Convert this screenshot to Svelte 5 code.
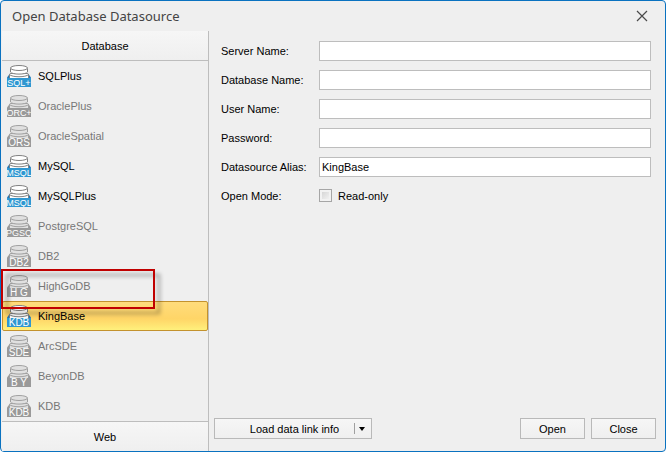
<script>
  const sources = [
    { name: 'SQLPlus', tag: 'SQL+', on: true },
    { name: 'OraclePlus', tag: 'ORC+' },
    { name: 'OracleSpatial', tag: 'ORS' },
    { name: 'MySQL', tag: 'MSQL', on: true },
    { name: 'MySQLPlus', tag: 'MSQL', on: true },
    { name: 'PostgreSQL', tag: 'PGSQ' },
    { name: 'DB2', tag: 'DB2' },
    { name: 'HighGoDB', tag: 'H G', marked: true },
    { name: 'KingBase', tag: 'KDB', on: true },
    { name: 'ArcSDE', tag: 'SDE' },
    { name: 'BeyonDB', tag: 'B Y' },
    { name: 'KDB', tag: 'KDB' }
  ];
  let selected = $state('KingBase');
  let alias = $state('KingBase');
  let readOnly = $state(false);
  const fields = [
    { id: 'server', label: 'Server Name:' },
    { id: 'database', label: 'Database Name:' },
    { id: 'user', label: 'User Name:' },
    { id: 'password', label: 'Password:', type: 'password' }
  ];
</script>

<div class="window">
  <header>
    <h1>Open Database Datasource</h1>
    <button class="x" aria-label="Close window">
      <svg width="12" height="12" viewBox="0 0 12 12"><path d="M1 1L11 11M11 1L1 11" stroke="#4a4a4a" stroke-width="1.2" /></svg>
    </button>
  </header>
  <div class="main">
    <nav>
      <button class="group top">Database</button>
      <ul>
        {#each sources as s}
          <li class:marked={s.marked}>
            <button
              class="item"
              class:selected={selected === s.name}
              disabled={!s.on}
              onclick={() => (selected = s.name)}
            >
              <svg class="icon" class:off={!s.on} width="24" height="22" viewBox="0 0 24 22" aria-hidden="true">
                <path class="tray" d="M3 8.500L0 12.500V14H24V12.500L21 8.500Z" />
                <path class="disk" d="M3.500 8.500C2.500 9 2.500 9.500 2.500 10V13.500H21.500V10C21.500 9.500 21.500 9 20.500 8.500Z" />
                <path class="line" d="M2.500 9.500C5 12.500 19 12.500 21.500 9.500" />
                <path class="disk" d="M3.500 3.500V7C4.500 9.800 19.500 9.800 20.500 7V3.500" />
                <ellipse class="disk" cx="12" cy="3" rx="8.500" ry="2.500" />
                <rect class="band" y="13" width="24" height="9" />
                <text x="12" y="21" text-anchor="middle" class="tag" class:tight={s.tag.length > 3}>{s.tag}</text>
              </svg>
              <span>{s.name}</span>
            </button>
          </li>
        {/each}
      </ul>
      <button class="group bottom">Web</button>
    </nav>
    <section>
      <form>
        {#each fields as f}
          <div class="row">
            <label for={f.id}>{f.label}</label>
            <input id={f.id} type={f.type ?? 'text'} />
          </div>
        {/each}
        <div class="row">
          <label for="alias">Datasource Alias:</label>
          <input id="alias" type="text" bind:value={alias} />
        </div>
        <div class="row">
          <span class="caption">Open Mode:</span>
          <label class="check"><input type="checkbox" bind:checked={readOnly} />Read-only</label>
        </div>
      </form>
      <footer>
        <button class="btn load">
          <span>Load data link info</span>
          <i></i>
          <svg width="6" height="4" viewBox="0 0 6 4"><path d="M0 0H6L3 4Z" fill="#000" /></svg>
        </button>
        <button class="btn push">Open</button>
        <button class="btn">Close</button>
      </footer>
    </section>
  </div>
</div>

<style>
  :global(body) {
    background: #fff;
  }
  .window {
    box-sizing: border-box;
    min-height: 100vh;
    display: flex;
    flex-direction: column;
    background: #efefef;
    border: 1px solid #0a72c0;
    border-radius: 4px;
    font: 11px/16px 'Liberation Sans', Arial, sans-serif;
    color: #000;
  }
  button,
  input {
    font: inherit;
    color: inherit;
    box-sizing: border-box;
    margin: 0;
  }
  header {
    display: flex;
    align-items: center;
    justify-content: space-between;
    height: 30px;
    padding: 0 17px 0 11px;
  }
  h1 {
    margin: 0;
    font: 13px/20px 'Noto Sans', 'Open Sans', sans-serif;
    color: #444;
  }
  .x {
    display: flex;
    padding: 0;
    border: 0;
    background: none;
  }
  .main {
    flex: 1;
    display: flex;
  }
  nav {
    flex: none;
    width: 208px;
    box-sizing: border-box;
    padding-left: 1px;
    border-right: 1px solid #bdbdbd;
    display: flex;
    flex-direction: column;
  }
  .group {
    height: 30px;
    padding: 0;
    border: 0 solid #bdbdbd;
    background: linear-gradient(#f6f6f6, #efefef);
  }
  .group.top {
    border-bottom-width: 1px;
  }
  .group.bottom {
    border-top-width: 1px;
    flex: 1;
  }
  ul {
    list-style: none;
    margin: 0;
    padding: 0;
  }
  li {
    position: relative;
  }
  .marked::after {
    content: '';
    position: absolute;
    z-index: 1;
    left: -1px;
    top: -2px;
    width: 154px;
    height: 40px;
    box-sizing: border-box;
    border: 2px solid #c00000;
    filter: drop-shadow(5px 5px 2px rgba(0, 0, 0, 0.4));
    pointer-events: none;
  }
  .item {
    width: 100%;
    height: 30px;
    display: flex;
    align-items: center;
    gap: 7px;
    padding: 0 4px;
    border: 1px solid transparent;
    border-radius: 2px;
    background: none;
    text-align: left;
  }
  .item:disabled {
    color: #777;
  }
  .item.selected {
    border-color: #c3922e;
    background: linear-gradient(#ffdc7c, #ffd567 60%, #fff07c);
  }
  .tray {
    fill: #2476b4;
  }
  .band {
    fill: #2f97d1;
  }
  .disk {
    fill: #fff;
    stroke: #808080;
  }
  .line {
    fill: none;
    stroke: #808080;
  }
  .off .tray,
  .off .band {
    fill: #999;
  }
  .off .disk {
    fill: #e0e0e0;
    stroke: #a0a0a0;
  }
  .off .line {
    stroke: #a0a0a0;
  }
  .tag {
    font: 10px 'Liberation Sans', Arial, sans-serif;
    fill: #fff;
  }
  .tag.tight {
    font-size: 9px;
  }
  section {
    flex: 1;
    min-width: 0;
    display: flex;
    flex-direction: column;
    justify-content: space-between;
  }
  form {
    padding: 5px 14px 0 12px;
  }
  .row {
    height: 29px;
    display: flex;
    align-items: center;
  }
  .row > label:first-child,
  .caption {
    flex: none;
    width: 98px;
  }
  .row > input {
    flex: 1;
    min-width: 0;
    height: 20px;
    padding: 0 2px;
    border: 1px solid #bdbdbd;
    border-radius: 0;
    background: #fff;
    outline: 0;
  }
  .check {
    display: flex;
    align-items: center;
    gap: 6px;
  }
  .check input {
    appearance: none;
    width: 13px;
    height: 13px;
    border: 1px solid #a6a6a6;
    background: linear-gradient(135deg, #cfcfcf, #f8f8f8);
    box-shadow: inset 0 0 0 2px #f2f2f2;
  }
  footer {
    display: flex;
    gap: 6px;
    padding: 0 9px 12px 5px;
  }
  .btn {
    width: 65px;
    height: 21px;
    padding: 0;
    border: 1px solid #b9b9b9;
    background: linear-gradient(#f6f6f6, #efefef);
  }
  .load {
    width: 158px;
    display: flex;
    align-items: center;
    padding-right: 6px;
  }
  .load span {
    flex: 1;
    padding-left: 20px;
  }
  .load i {
    width: 1px;
    height: 11px;
    margin-right: 4px;
    background: #a0a0a0;
  }
  .push {
    margin-left: auto;
  }
</style>
